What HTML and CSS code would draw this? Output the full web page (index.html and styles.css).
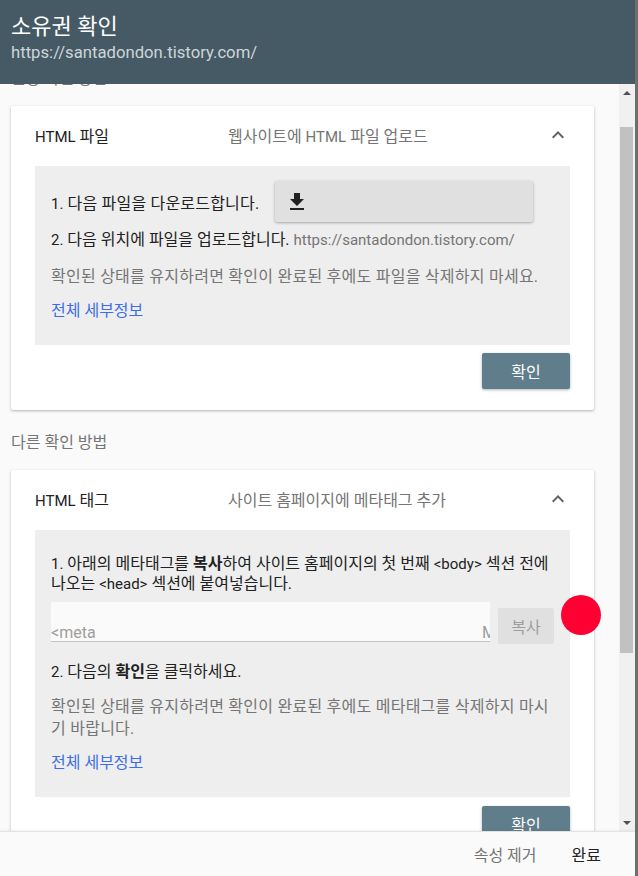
FILE: index.html
```html
<!DOCTYPE html>
<html lang="ko">
<head>
  <meta charset="UTF-8" />
  <meta name="viewport" content="width=device-width, initial-scale=1.0"/>
  <title>소유권 확인</title>
  <link rel="stylesheet" href="styles.css">
</head>
<body>

  <div class="dialog">

    <!-- Header -->
    <div class="dialog-head">
      <h1>소유권 확인</h1>
      <div class="site">https://santadondon.tistory.com/</div>
    </div>

    <!-- Body -->
    <div class="dialog-body">
      <div class="scroll" id="scroll">
        <div class="scroll-inner">

          <p class="group-label">권장 확인 방법</p>

          <!-- HTML 파일 -->
          <div class="card">
            <div class="card-head">
              <span class="card-title"><span class="en">HTML</span> 파일</span>
              <span class="card-sub">웹사이트에 <span class="en">HTML</span> 파일 업로드</span>
              <svg class="chevron" viewBox="0 0 24 24"><path d="M7.41 15.41L12 10.83l4.59 4.58L18 14l-6-6-6 6z"/></svg>
            </div>
            <div class="box">
              <div class="step-row">
                <span><span class="en">1.</span> 다음 파일을 다운로드합니다.</span>
                <button class="download">
                  <svg viewBox="0 0 24 24"><path d="M19 9h-4V3H9v6H5l7 7 7-7zM5 18v2h14v-2H5z"/></svg>
                </button>
              </div>
              <p class="step"><span class="en">2.</span> 다음 위치에 파일을 업로드합니다. <span class="en grey">https://santadondon.tistory.com/</span></p>
              <p class="hint">확인된 상태를 유지하려면 확인이 완료된 후에도 파일을 삭제하지 마세요.</p>
              <a class="more" href="#">전체 세부정보</a>
            </div>
            <div class="actions">
              <button class="verify">확인</button>
            </div>
          </div>

          <p class="group-label">다른 확인 방법</p>

          <!-- HTML 태그 -->
          <div class="card">
            <div class="card-head">
              <span class="card-title"><span class="en">HTML</span> 태그</span>
              <span class="card-sub">사이트 홈페이지에 메타태그 추가</span>
              <svg class="chevron" viewBox="0 0 24 24"><path d="M7.41 15.41L12 10.83l4.59 4.58L18 14l-6-6-6 6z"/></svg>
            </div>
            <div class="box box-tag">
              <p class="step first"><span class="en">1.</span> 아래의 메타태그를 <b>복사</b>하여 사이트 홈페이지의 첫 번째 <span class="en">&lt;body&gt;</span> 섹션 전에 나오는 <span class="en">&lt;head&gt;</span> 섹션에 붙여넣습니다.</p>
              <div class="copy-row">
                <div class="meta-field">
                  <span>&lt;meta</span>
                  <span class="cut">M</span>
                </div>
                <button class="copy">복사</button>
                <span class="dot"></span>
              </div>
              <p class="step gap"><span class="en">2.</span> 다음의 <b>확인</b>을 클릭하세요.</p>
              <p class="hint wide">확인된 상태를 유지하려면 확인이 완료된 후에도 메타태그를 삭제하지 마시기 바랍니다.</p>
              <a class="more" href="#">전체 세부정보</a>
            </div>
            <div class="actions tag-actions">
              <button class="verify">확인</button>
            </div>
          </div>

          <!-- 접힌 방법 -->
          <div class="card card-closed">
            <div class="card-head">
              <span class="card-title">Google 애널리틱스</span>
              <span class="card-sub">Google 애널리틱스 계정 사용</span>
              <svg class="chevron" viewBox="0 0 24 24"><path d="M16.59 8.59L12 13.17 7.41 8.59 6 10l6 6 6-6z"/></svg>
            </div>
          </div>
          <div class="card card-closed">
            <div class="card-head">
              <span class="card-title">Google 태그 관리자</span>
              <span class="card-sub">Google 태그 관리자 계정 사용</span>
              <svg class="chevron" viewBox="0 0 24 24"><path d="M16.59 8.59L12 13.17 7.41 8.59 6 10l6 6 6-6z"/></svg>
            </div>
          </div>

        </div>
      </div>

      <!-- Scrollbar -->
      <div class="scrollbar">
        <div class="arrow up"></div>
        <div class="track-gap"></div>
        <div class="thumb"></div>
        <div class="track-rest"></div>
        <div class="arrow down"></div>
      </div>
    </div>

    <!-- Footer -->
    <div class="dialog-foot">
      <a href="#" class="foot-btn muted">속성 제거</a>
      <a href="#" class="foot-btn">완료</a>
    </div>

  </div>

  <script>
    document.getElementById("scroll").scrollTop = 38;
  </script>
</body>
</html>
```

FILE: styles.css
```css
body {
  margin: 0;
  font-family: Roboto, "Noto Sans CJK KR", sans-serif;
  background-color: #6e6e6e;
  color: #212121;
}

.dialog {
  width: 635px;
  height: 876px;
  display: flex;
  flex-direction: column;
  background-color: #fafafa;
}

.en {
  font-size: 15px;
  letter-spacing: 0;
}

/* Header */
.dialog-head {
  height: 84px;
  box-sizing: border-box;
  padding: 14px 11px 0;
  background-color: #455a64;
  flex-shrink: 0;
}

.dialog-head h1 {
  margin: 0;
  font-size: 22px;
  font-weight: 400;
  line-height: 26px;
  color: #fff;
}

.dialog-head .site {
  margin-top: 3px;
  font-size: 16.7px;
  line-height: 20px;
  color: #cdd5d9;
}

/* Body */
.dialog-body {
  flex: 1;
  display: flex;
  min-height: 0;
}

.scroll {
  flex: 1;
  overflow-y: auto;
  scrollbar-width: none;
}

.scroll::-webkit-scrollbar {
  display: none;
}

.scroll-inner {
  padding: 23px 25px 30px 11px;
}

.group-label {
  margin: 0 0 17px;
  font-size: 16px;
  line-height: 20px;
  color: #757575;
}

.card + .group-label {
  margin-top: 23px;
}

.card {
  background-color: #fff;
  border-radius: 2px;
  box-shadow: 0 1px 3px rgba(0, 0, 0, 0.28);
  padding: 0 24px 21px;
}

.card + .card {
  margin-top: 10px;
}

.card-head {
  height: 58px;
  margin-bottom: 2px;
  display: flex;
  align-items: center;
  font-size: 16px;
}

.card-title {
  width: 193px;
  flex-shrink: 0;
}

.card-sub {
  flex: 1;
  color: #757575;
}

.chevron {
  width: 24px;
  height: 24px;
  fill: #616161;
}

.card-closed {
  padding-bottom: 0;
}

/* Grey box */
.box {
  background-color: #eeeeee;
  padding: 15px 16px 24px;
  font-size: 16px;
}

.step-row {
  display: flex;
  align-items: center;
  height: 41px;
  letter-spacing: 0.2px;
}

.download {
  margin-left: 16px;
  width: 258px;
  height: 41px;
  border: none;
  border-radius: 2px;
  background-color: #e0e0e0;
  box-shadow: 0 1px 3px rgba(0, 0, 0, 0.3);
  padding: 0 0 0 10px;
  text-align: left;
}

.download svg {
  width: 24px;
  height: 24px;
  fill: #212121;
  display: block;
}

.step {
  margin: 8px 0 0;
  line-height: 20px;
}

.step.first {
  margin-top: 9px;
}

.step.gap {
  margin-top: 18px;
}

.grey {
  color: #757575;
}

.hint {
  margin: 17px 0 0;
  line-height: 20px;
  color: #757575;
  letter-spacing: 0.25px;
}

.hint.wide {
  margin-top: 14px;
  line-height: 22px;
}

.more {
  display: block;
  margin-top: 14px;
  line-height: 20px;
  color: #3d6ee6;
  text-decoration: none;
}

.box-tag .more {
  margin-top: 13px;
}

/* Copy field */
.copy-row {
  position: relative;
  display: flex;
  align-items: flex-start;
  margin-top: 8px;
  height: 42px;
}

.meta-field {
  width: 439px;
  height: 40px;
  box-sizing: border-box;
  padding-top: 21px;
  background-color: #fafafa;
  border-bottom: 1px solid #c4c4c4;
  display: flex;
  justify-content: space-between;
  overflow: hidden;
  line-height: 20px;
  color: #9e9e9e;
  font-size: 16px;
}

.meta-field .cut {
  margin-right: -6px;
}

.copy {
  margin: 6px 0 0 8px;
  width: 56px;
  height: 36px;
  border: none;
  border-radius: 2px;
  background-color: #e0e0e0;
  color: #9e9e9e;
  font-family: inherit;
  font-size: 16px;
}

.dot {
  position: absolute;
  left: 510px;
  top: -7px;
  width: 40px;
  height: 40px;
  border-radius: 50%;
  background-color: #ff0033;
}

/* Buttons */
.actions {
  display: flex;
  justify-content: flex-end;
  margin-top: 8px;
}

.tag-actions {
  margin-top: 9px;
}

.verify {
  width: 88px;
  height: 36px;
  border: none;
  border-radius: 2px;
  background-color: #607d8b;
  color: #fff;
  font-family: inherit;
  font-size: 16px;
  box-shadow: 0 1px 3px rgba(0, 0, 0, 0.3);
}

/* Scrollbar */
.scrollbar {
  width: 16px;
  display: flex;
  flex-direction: column;
  background-color: #f0f0f0;
  flex-shrink: 0;
}

.arrow {
  height: 17px;
  display: flex;
  align-items: center;
  justify-content: center;
}

.arrow::before {
  content: "";
  border-left: 4px solid transparent;
  border-right: 4px solid transparent;
}

.arrow.up::before {
  border-bottom: 4px solid #505050;
}

.arrow.down::before {
  border-top: 4px solid #505050;
}

.track-gap {
  height: 26px;
}

.thumb {
  height: 526px;
  margin: 0 2px 0 1px;
  background-color: #c1c1c1;
}

.track-rest {
  flex: 1;
}

/* Footer */
.dialog-foot {
  height: 45px;
  box-sizing: border-box;
  flex-shrink: 0;
  border-top: 1px solid #e3e3e3;
  box-shadow: 0 -1px 2px rgba(0, 0, 0, 0.05);
  background-color: #fafafa;
  display: flex;
  align-items: center;
  justify-content: flex-end;
  gap: 35px;
  padding-right: 34px;
}

.foot-btn {
  font-size: 16px;
  color: #212121;
  text-decoration: none;
}

.foot-btn.muted {
  color: #757575;
}
```
